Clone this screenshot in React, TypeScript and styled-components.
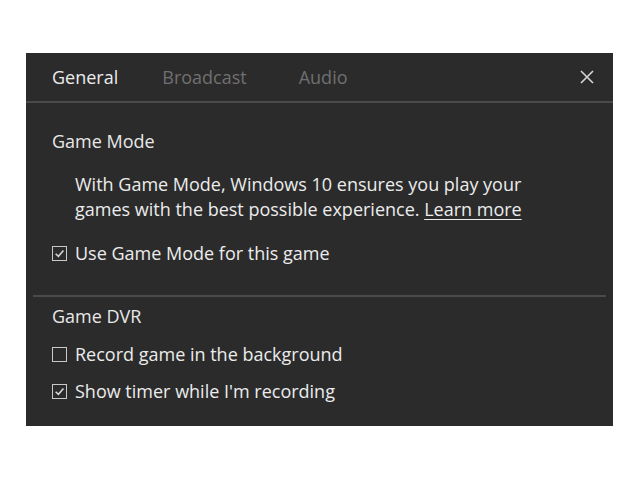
import React from "react";
import styled, { createGlobalStyle } from "styled-components";

const Global = createGlobalStyle`
  html, body { margin: 0; padding: 0; background: #ffffff; }
  body { font-family: "Open Sans", "Noto Sans", sans-serif; }
`;

const Page = styled.div`
  width: 640px;
  height: 480px;
  padding: 53px 0 0 26px;
  box-sizing: border-box;
`;

const Panel = styled.div`
  width: 587px;
  height: 373px;
  background: #2b2b2b;
  color: #e4e4e4;
  display: flex;
  flex-direction: column;
`;

const Header = styled.div`
  height: 48px;
  display: flex;
  align-items: center;
  padding: 0 19px 0 26px;
  border-bottom: 2px solid #4a4a4a;
`;

const Tabs = styled.div`
  display: flex;
  flex: 1;
`;

const Tab = styled.span<{ $active?: boolean; $gap?: number }>`
  font-size: 18px;
  margin-left: ${(p) => p.$gap ?? 0}px;
  color: ${(p) => (p.$active ? "#ececec" : "#707070")};
`;

const Close = styled.button`
  width: 14px;
  height: 14px;
  padding: 0;
  border: none;
  background: none;
  display: flex;
`;

const Section = styled.div<{ $top: number }>`
  padding: ${(p) => p.$top}px 26px 0 26px;
  display: flex;
  flex-direction: column;
`;

const Heading = styled.div`
  font-size: 18px;
  line-height: 24px;
  color: #e8e8e8;
`;

const Body = styled.p`
  margin: 19px 0 0 23px;
  font-size: 18px;
  line-height: 25px;
  color: #ececec;
`;

const Link = styled.a`
  color: inherit;
  text-decoration: underline;
  text-underline-offset: 3px;
`;

const Option = styled.label<{ $top: number }>`
  display: flex;
  align-items: center;
  gap: 8px;
  margin-top: ${(p) => p.$top}px;
  font-size: 18px;
  line-height: 24px;
  color: #ececec;
`;

const Box = styled.span`
  width: 15px;
  height: 15px;
  box-sizing: border-box;
  border: 1.5px solid #c9c9c9;
  display: flex;
  align-items: center;
  justify-content: center;
  flex: none;
`;

const Divider = styled.div`
  height: 2px;
  margin: 30px 7px 0 7px;
  background: #4a4a4a;
`;

const Check: React.FC<{ checked?: boolean }> = ({ checked }) => (
  <Box>
    {checked && (
      <svg width="11" height="11" viewBox="0 0 10 10">
        <path d="M1.5 5.2 L4 7.6 L8.6 2.2" fill="none" stroke="#d6d6d6" strokeWidth="1.4" />
      </svg>
    )}
  </Box>
);

export default function App() {
  return (
    <>
      <Global />
      <Page>
        <Panel>
          <Header>
            <Tabs>
              <Tab $active>General</Tab>
              <Tab $gap={44}>Broadcast</Tab>
              <Tab $gap={52}>Audio</Tab>
            </Tabs>
            <Close aria-label="Close">
              <svg width="14" height="14" viewBox="0 0 14 14">
                <path d="M1 1 L13 13 M13 1 L1 13" stroke="#d6d6d6" strokeWidth="1.6" />
              </svg>
            </Close>
          </Header>
          <Section $top={26}>
            <Heading>Game Mode</Heading>
            <Body>
              With Game Mode, Windows 10 ensures you play your
              <br />
              games with the best possible experience. <Link>Learn more</Link>
            </Body>
            <Option $top={19}>
              <Check checked />
              Use Game Mode for this game
            </Option>
          </Section>
          <Divider />
          <Section $top={7}>
            <Heading>Game DVR</Heading>
            <Option $top={14}>
              <Check />
              Record game in the background
            </Option>
            <Option $top={13}>
              <Check checked />
              Show timer while I'm recording
            </Option>
          </Section>
        </Panel>
      </Page>
    </>
  );
}
